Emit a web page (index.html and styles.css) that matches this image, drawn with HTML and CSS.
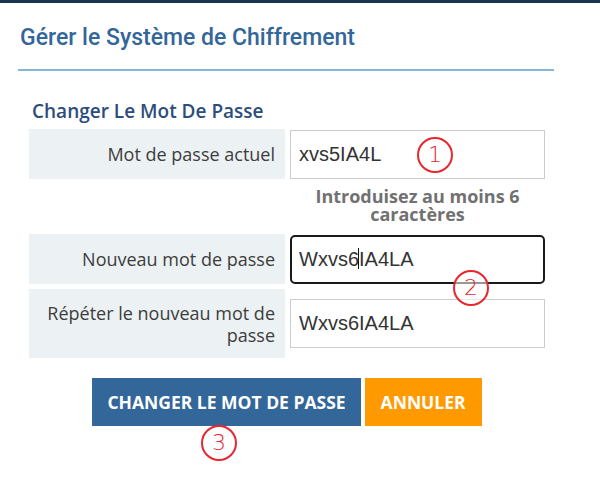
FILE: index.html
```
<!DOCTYPE html>

<html>
  <head>
    <title>Gérer le Système de Chiffrement</title>

    <link rel="stylesheet" href="styles.css">
  </head>
  <body>
    <main class="panel">
      <h1 class="title">Gérer le Système de Chiffrement</h1>

      <form class="pw-form">
        <h2 class="pw-heading">Changer Le Mot De Passe</h2>

        <div class="row">
          <label class="row-label" for="current-pw">Mot de passe actuel</label>
          <div class="row-field">
            <input id="current-pw" class="field" type="text" value="xvs5IA4L">
          </div>
        </div>

        <p class="hint">Introduisez au moins 6 caractères</p>

        <div class="row">
          <label class="row-label" for="new-pw">Nouveau mot de passe</label>
          <div class="row-field">
            <input id="new-pw" class="field field-focus" type="text" value="Wxvs6IA4LA">
            <span class="caret"></span>
          </div>
        </div>

        <div class="row row-tall">
          <label class="row-label" for="repeat-pw">Répéter le nouveau mot de passe</label>
          <div class="row-field">
            <input id="repeat-pw" class="field" type="text" value="Wxvs6IA4LA">
          </div>
        </div>

        <div class="actions">
          <button type="submit" class="btn btn-primary">Changer le mot de passe</button>
          <button type="button" class="btn btn-cancel">Annuler</button>
        </div>
      </form>
    </main>

    <!-- step markers drawn over the form -->
    <span class="mark mark-1">1</span>
    <span class="mark mark-2">2</span>
    <span class="mark mark-3">3</span>
  </body>
</html>
```

FILE: styles.css
```
* { box-sizing: border-box; }
body {
  margin: 0;
  background: white;
  border-top: 3px solid #17354f;
  font-family: "Open Sans", sans-serif;
  color: #3d3d3d;
  min-height: 490px;
  position: relative;
}
.panel {
  width: 554px;
  padding-left: 18px;
}
.title {
  margin: 0;
  padding: 20px 2px 16px;
  border-bottom: 2px solid #86b6d6;
  font-family: Roboto, sans-serif;
  font-weight: 500;
  font-size: 23px;
  line-height: 30px;
  color: #336699;
}
.pw-form {
  margin-left: 11px;
  width: 516px;
}
.pw-heading {
  margin: 29px 0 7px 3px;
  font-size: 19px;
  font-weight: 600;
  line-height: 22px;
  color: #2c4d7b;
}
.row {
  display: flex;
  gap: 5px;
  height: 50px;
}
.row + .row {
  height: 49px;
}
.row-tall {
  margin-top: 5px;
  height: 69px !important;
}
.row-label {
  width: 256px;
  padding: 0 10px;
  background: #ecf1f3;
  display: flex;
  align-items: center;
  justify-content: flex-end;
  text-align: right;
  font-size: 18px;
  font-weight: 500;
  line-height: 22px;
}
.row-field {
  width: 255px;
  display: flex;
  align-items: center;
  position: relative;
}
.field {
  width: 100%;
  height: 49px;
  border: 1px solid #ccc;
  padding: 0 8px;
  font-family: "Liberation Sans", Arial, sans-serif;
  font-size: 20px;
  color: #333;
  outline: none;
}
.field-focus {
  border: 2px solid #1a1a1a;
  border-radius: 5px;
  padding: 0 7px;
}
.caret {
  position: absolute;
  left: 68px;
  top: 14px;
  width: 1px;
  height: 21px;
  background: #111;
}
.hint {
  margin: 0 0 0 261px;
  width: 255px;
  height: 55px;
  padding-top: 8px;
  text-align: center;
  font-size: 18px;
  font-weight: 700;
  line-height: 18px;
  color: #717171;
}
.actions {
  display: flex;
  justify-content: center;
  gap: 4px;
  margin-top: 20px;
}
.btn {
  height: 48px;
  border: 0;
  padding: 0 15px;
  font-family: "Open Sans", sans-serif;
  font-size: 17.5px;
  font-weight: 700;
  text-transform: uppercase;
  color: white;
  cursor: pointer;
}
.btn-primary {
  background: #336699;
}
.btn-cancel {
  background: #ff9900;
  padding: 0 16px;
}
.mark {
  position: absolute;
  width: 36px;
  height: 36px;
  border: 2px solid #e8262e;
  border-radius: 50%;
  background: rgba(255, 255, 255, 0.55);
  color: #e8262e;
  font-family: "DejaVu Sans", sans-serif;
  font-weight: 300;
  font-size: 22px;
  line-height: 32px;
  text-align: center;
}
.mark-1 { left: 417px; top: 134px; }
.mark-2 { left: 453px; top: 267px; }
.mark-3 { left: 201px; top: 422px; }
```
